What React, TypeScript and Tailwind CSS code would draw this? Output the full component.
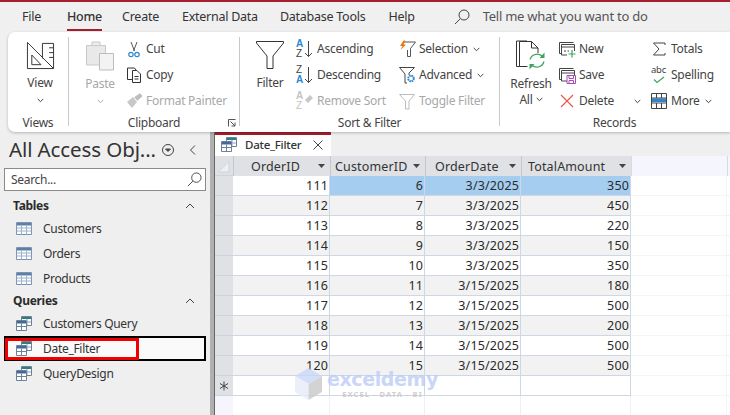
import type { ReactNode } from "react";

function Chevron({ className = "", color = "#444" }: { className?: string; color?: string }) {
  return (
    <svg width="7" height="5" viewBox="0 0 7 5" className={className} fill="none" stroke={color} strokeWidth="1">
      <path d="M.7.9 3.5 3.7 6.3.9" />
    </svg>
  );
}

const ViewIcon = () => (
  <svg width="29" height="29" viewBox="0 0 30 30" fill="none" stroke="#333" strokeWidth="1">
    <path d="M1.500 1.500 28.500 28.500H1.500Z" />
    <path d="M6 14.500 15.500 24.500H6Z" />
    <path d="M17 2.500H28.500V28" />
    <path d="M17 2.500V18M24 7H28.500M24 12H28.500M24 17H28.500" />
  </svg>
);

const PasteIcon = () => (
  <svg width="30" height="32" viewBox="0 0 30 32" fill="none">
    <path d="M1.500 5.500H20.500V25H1.500Z" fill="#e9e9e9" stroke="#c9c9c9" />
    <path d="M7 5.500V2H15V5.500Z" fill="#eee" stroke="#c9c9c9" />
    <path d="M14.500 13.500H28.500V30H14.500Z" fill="#f3f3f3" stroke="#bdbdbd" />
  </svg>
);

const CutIcon = () => (
  <svg width="16" height="17" viewBox="0 0 16 17" fill="none">
    <path d="M5 1 8.500 10M11 1 7.500 10" stroke="#555" />
    <circle cx="5" cy="13.500" r="2.200" stroke="#2e86d0" strokeWidth="1.200" />
    <circle cx="11" cy="13.500" r="2.200" stroke="#2e86d0" strokeWidth="1.200" />
  </svg>
);

const CopyIcon = () => (
  <svg width="16" height="16" viewBox="0 0 16 16" fill="none" stroke="#333">
    <path d="M6 12.500H1.500V1H8.500L10 3" />
    <path d="M6.500 3.500H11L14.500 7V15.500H6.500Z" fill="#fff" />
    <path d="M8.500 9.500H12.500M8.500 12H12.500" />
  </svg>
);

const BrushIcon = () => (
  <svg width="17" height="16" viewBox="0 0 17 16" fill="none">
    <path d="M1 9 7 4 11 9 6 15Z" fill="#c8c8c8" />
    <path d="M8.500 4.500 14 .8 16 3 11 7.500" fill="#bdbdbd" stroke="#bdbdbd" />
  </svg>
);

const FunnelIcon = () => (
  <svg width="30" height="30" viewBox="0 0 30 30" fill="none" stroke="#333">
    <path d="M1.500 1.500H28.500V3L18 16V28.500H12V16L1.500 3Z" />
  </svg>
);

function SortIcon({ top, bottom, muted }: { top: string; bottom: string; muted?: boolean }) {
  const blue = muted ? "#c4c4c4" : "#2e86d0";
  const dark = muted ? "#c4c4c4" : "#444";
  return (
    <div className="relative w-[18px] h-[18px] leading-none text-[10px] font-['Liberation_Sans',sans-serif]">
      <span className={`absolute left-0 top-[-1px] ${top === "A" ? "font-bold" : ""}`} style={{ color: top === "A" ? blue : dark }}>{top}</span>
      <span className={`absolute left-0 top-[9px] ${bottom === "A" ? "font-bold" : ""}`} style={{ color: bottom === "A" ? blue : dark }}>{bottom}</span>
      {muted ? (
        <svg width="10" height="10" viewBox="0 0 10 10" className="absolute left-[8px] top-[2px]">
          <path d="M1 6 6 1 9 4 4 9Z" fill="#c8c8c8" />
        </svg>
      ) : (
        <svg width="9" height="17" viewBox="0 0 9 17" className="absolute left-[8px] top-[1px]" fill="none" stroke="#444">
          <path d="M4.500 0V15.500M1 12 4.500 15.500 8 12" />
        </svg>
      )}
    </div>
  );
}

const SelectionIcon = () => (
  <svg width="17" height="18" viewBox="0 0 17 18" fill="none">
    <path d="M5 2H16.500L11.500 8.500V16.500H8.500V10" stroke="#555" />
    <path d="M4.500.5 1 6H3.500L1.500 10 7 4.500H4.500L6.500.5Z" fill="#e8770c" />
  </svg>
);

const AdvancedIcon = () => (
  <svg width="17" height="18" viewBox="0 0 17 18" fill="none">
    <path d="M.5 1.500H15.500L10 7V9M.5 1.500 6 8V17H8" stroke="#444" />
    <circle cx="12" cy="12.500" r="2.800" stroke="#2e86d0" strokeWidth="2" strokeDasharray="1.600 .6" />
    <circle cx="12" cy="12.500" r="1" fill="#fff" />
  </svg>
);

const ToggleIcon = () => (
  <svg width="17" height="17" viewBox="0 0 17 17" fill="none" stroke="#bdbdbd">
    <path d="M.5 1.500H15.500L10 8V16H6.500V8Z" />
  </svg>
);

const RefreshIcon = () => (
  <svg width="30" height="32" viewBox="0 0 30 32" fill="none">
    <path d="M4 26.500H.5V1H11" stroke="#333" />
    <path d="M11.500 26.500H3.500V1.500H15.500L22 8V13M15.500 1.500V8H22" stroke="#333" fill="#fff" />
    <path d="M14 19.500A7.500 7.500 0 0 1 27 17M28 21.500A7.500 7.500 0 0 1 15 24.500" stroke="#3fa45b" strokeWidth="1.200" />
    <path d="M28.500 12.500V18H23.500ZM13.500 29.500V24H18.500Z" fill="#3fa45b" />
  </svg>
);

function RecIcon({ children }: { children: ReactNode }) {
  return (
    <svg width="17" height="17" viewBox="0 0 17 17" fill="none">
      <path d="M2.500 12.500H.5V1.500H14.500" stroke="#444" />
      <path d="M2.500 3.500H15.500V10M2.500 3.500V14H8M2.500 6H15.500" stroke="#444" fill="#fff" />
      {children}
    </svg>
  );
}

const NewIcon = () => (
  <RecIcon>
    <path d="M5 10H7M8.500 10H10" stroke="#444" />
    <path d="M13 9V16.500M9.500 13H16.500" stroke="#3fa45b" strokeWidth="1.200" />
  </RecIcon>
);

const SaveIcon = () => (
  <RecIcon>
    <path d="M8 8.500H16.500V16.500H8Z" fill="#fff" stroke="#a64db5" />
    <path d="M10 9V11.500H14.500V9M10 16V13.500H14.500V16" stroke="#a64db5" />
  </RecIcon>
);

const DeleteIcon = () => (
  <svg width="14" height="14" viewBox="0 0 14 14" fill="none" stroke="#e8594d" strokeWidth="1.200">
    <path d="M1 1 13 13M13 1 1 13" />
  </svg>
);

const SigmaIcon = () => (
  <svg width="14" height="14" viewBox="0 0 14 14" fill="none" stroke="#444">
    <path d="M13 3V1H1.500L7 7 1.500 13H13V11" />
  </svg>
);

const SpellIcon = () => (
  <div className="relative w-[16px] h-[18px]">
    <span className="absolute left-0 top-[-3px] text-[9.5px] text-[#444] leading-[14px]">abc</span>
    <svg width="12" height="8" viewBox="0 0 12 8" className="absolute left-[2px] top-[10px]" fill="none" stroke="#3fa45b" strokeWidth="1.200">
      <path d="M1 3.500 4 6.500 11 1" />
    </svg>
  </div>
);

const MoreIcon = () => (
  <svg width="16" height="16" viewBox="0 0 16 16" fill="none">
    <path d="M.5.5H15.500V15.500H.5Z" stroke="#444" fill="#fff" />
    <path d="M1 5.500H15V9H1Z" fill="#2e86d0" />
    <path d="M.5 5H15.500M.5 10H15.500M5.500.5V5M10.500.5V5M5.500 10V15.500M10.500 10V15.500" stroke="#444" />
  </svg>
);

const SearchGlass = ({ size = 16, color = "#444" }: { size?: number; color?: string }) => (
  <svg width={size} height={size} viewBox="0 0 16 16" fill="none" stroke={color}>
    <circle cx="10" cy="6" r="5" />
    <path d="M6.300 9.700 1 15" />
  </svg>
);

const TableIcon = () => (
  <svg width="16" height="13" viewBox="0 0 16 13" fill="none">
    <path d="M.5.5H15.500V12.500H.5Z" fill="#fff" stroke="#7b93b5" />
    <path d="M1 1H15V3.500H1Z" fill="#5f7ea8" />
    <path d="M.5 6H15.500M.5 9H15.500M5.500 3.500V12.500M10.500 3.500V12.500" stroke="#9db2cf" />
  </svg>
);

const QueryIcon = () => (
  <svg width="16" height="15" viewBox="0 0 16 15" fill="none">
    <path d="M5.500.5H15.500V9.500H5.500Z" fill="#fff" stroke="#6d8297" />
    <path d="M6 1H15V3H6Z" fill="#2f7d86" />
    <path d="M11 3V9M6 6H15" stroke="#8fa2b5" />
    <path d="M.5 4.500H10.500V14.500H.5Z" fill="#fff" stroke="#6d8297" />
    <path d="M1 5H10V7.500H1Z" fill="#3f6a9b" />
    <path d="M1 10.500H10M5.500 7.500V14.500" stroke="#6d8297" />
  </svg>
);

function SmallBtn({ icon, label, muted, chevron }: { icon: ReactNode; label: string; muted?: boolean; chevron?: boolean }) {
  return (
    <div className={`flex items-center h-[26px] gap-[3px] ${muted ? "text-[#a8a8a8]" : "text-[#444]"}`}>
      <div className="w-[18px] flex justify-center items-center">{icon}</div>
      <span className="whitespace-nowrap">{label}</span>
      {chevron && <Chevron className="ml-[2px]" />}
    </div>
  );
}

function Group({ w, label, children, launcher, noBorder }: { w: string; label: string; children: ReactNode; launcher?: boolean; noBorder?: boolean }) {
  return (
    <div className={`${w} relative flex flex-col h-[89px] ${noBorder ? "" : "border-r border-[#c9c9c9]"}`}>
      <div className="flex-1 flex">{children}</div>
      <div className="h-[14px] leading-[14px] text-center text-[#444] text-[12px] mb-[-4px]">{label}</div>
      {launcher && (
        <svg width="8" height="8" viewBox="0 0 8 8" fill="none" stroke="#555" className="absolute right-[3px] bottom-[-1px]">
          <path d="M.5 7.500V.5H7.500M2.500 2.500 7 7M7 3.500V7H3.500" />
        </svg>
      )}
    </div>
  );
}

const rows = [
  [111, 6, "3/3/2025", 350],
  [112, 7, "3/3/2025", 450],
  [113, 8, "3/3/2025", 220],
  [114, 9, "3/3/2025", 150],
  [115, 10, "3/3/2025", 350],
  [116, 11, "3/15/2025", 180],
  [117, 12, "3/15/2025", 500],
  [118, 13, "3/15/2025", 200],
  [119, 14, "3/15/2025", 500],
  [120, 15, "3/15/2025", 500],
];

const cols = [
  { name: "OrderID", pad: "pl-[17px]" },
  { name: "CustomerID", pad: "pl-[4px]" },
  { name: "OrderDate", pad: "pl-[9px]" },
  { name: "TotalAmount", pad: "pl-[6px]" },
];
const gridCols = "grid grid-cols-[18px_97px_95px_96px_110px_96px_3px]";

function NavItem({ icon, label, selected }: { icon: ReactNode; label: string; selected?: boolean }) {
  return (
    <div className={`flex items-center h-[25px] ${selected ? "ml-[4px] mr-[4px] border-2 border-black bg-[#fafafa] pl-[10px]" : "pl-[16px]"}`}>
      <div className="w-[27px] flex">{icon}</div>
      <span className="text-[#333] whitespace-nowrap">{label}</span>
    </div>
  );
}

function NavHeader({ label, h }: { label: string; h: string }) {
  return (
    <div className={`flex items-center justify-between ${h} pl-[13px] pr-[15px]`}>
      <span className="font-bold text-[#2b2b2b]">{label}</span>
      <svg width="10" height="6" viewBox="0 0 10 6" fill="none" stroke="#444"><path d="M1 5 5 1 9 5" /></svg>
    </div>
  );
}

export default function App() {
  const menu = ["File", "Home", "Create", "External Data", "Database Tools", "Help"];
  const menuGaps: Record<string, string> = {
    File: "ml-[22px]",
    Home: "ml-[26px]",
    Create: "ml-[20px]",
    "External Data": "ml-[23px]",
    "Database Tools": "ml-[22px]",
    Help: "ml-[23px]",
  };

  return (
    <div className="w-[730px] h-[415px] overflow-hidden bg-[#f0f0f0] font-['Noto_Sans',sans-serif] text-[12px] tracking-[-0.25px] flex flex-col">
      <div className="h-[2px] bg-[#a4202e]" />

      {/* tabs */}
      <div className="h-[30px] flex items-center text-[12.5px] text-[#333]">
        {menu.map((m) => (
          <div key={m} className={`${menuGaps[m]} relative`}>
            <span className={m === "Home" ? "font-medium" : ""}>{m}</span>
            {m === "Home" && <div className="absolute left-0 right-0 top-[21px] h-[2px] bg-[#a4202e]" />}
          </div>
        ))}
        <div className="ml-[39px] mr-[13px]"><SearchGlass /></div>
        <span className="text-[#555] text-[13px]">Tell me what you want to do</span>
      </div>

      {/* ribbon */}
      <div className="ml-[8px] h-[100px] bg-white rounded-l-[7px] shadow-[0_1px_3px_rgba(0,0,0,0.25)] flex pt-[5px] relative z-10">
        <Group w="w-[61px]" label="Views">
          <div className="flex-1 flex flex-col items-center pt-[4px] pl-[4px]">
            <ViewIcon />
            <span className="mt-[4px] text-[#444]">View</span>
            <Chevron className="mt-[6px]" />
          </div>
        </Group>
        <Group w="w-[171px]" label="Clipboard" launcher>
          <div className="w-[57px] flex flex-col items-center pt-[3px] pl-[5px] text-[#a8a8a8]">
            <PasteIcon />
            <span className="mt-[3px]">Paste</span>
            <Chevron className="mt-[6px]" color="#a8a8a8" />
          </div>
          <div className="flex flex-col -mt-[1px] -ml-[1px]">
            <SmallBtn icon={<CutIcon />} label="Cut" />
            <SmallBtn icon={<CopyIcon />} label="Copy" />
            <SmallBtn icon={<BrushIcon />} label="Format Painter" muted />
          </div>
        </Group>
        <Group w="w-[260px]" label="Sort & Filter">
          <div className="w-[55px] flex flex-col items-center pt-[3px] pl-[5px]">
            <FunnelIcon />
            <span className="mt-[4px] text-[#444]">Filter</span>
          </div>
          <div className="w-[103px] flex flex-col -mt-[1px] pl-[1px]">
            <SmallBtn icon={<SortIcon top="A" bottom="Z" />} label="Ascending" />
            <SmallBtn icon={<SortIcon top="Z" bottom="A" />} label="Descending" />
            <SmallBtn icon={<SortIcon top="A" bottom="Z" muted />} label="Remove Sort" muted />
          </div>
          <div className="flex flex-col -mt-[1px]">
            <SmallBtn icon={<SelectionIcon />} label="Selection" chevron />
            <SmallBtn icon={<AdvancedIcon />} label="Advanced" chevron />
            <SmallBtn icon={<ToggleIcon />} label="Toggle Filter" muted />
          </div>
        </Group>
        <Group w="w-[229px]" label="Records" noBorder>
          <div className="w-[58px] flex flex-col items-center pt-[3px] pl-[4px] text-[#444]">
            <RefreshIcon />
            <span className="mt-[4px] leading-[16px]">Refresh</span>
            <span className="flex items-center gap-[3px] leading-[15px]">All <Chevron /></span>
          </div>
          <div className="w-[92px] flex flex-col -mt-[1px]">
            <SmallBtn icon={<NewIcon />} label="New" />
            <SmallBtn icon={<SaveIcon />} label="Save" />
            <div className="flex items-center">
              <SmallBtn icon={<DeleteIcon />} label="Delete" />
              <Chevron className="ml-[20px]" />
            </div>
          </div>
          <div className="flex flex-col -mt-[1px]">
            <SmallBtn icon={<SigmaIcon />} label="Totals" />
            <SmallBtn icon={<SpellIcon />} label="Spelling" />
            <SmallBtn icon={<MoreIcon />} label="More" chevron />
          </div>
        </Group>
      </div>

      <div className="flex-1 flex min-h-0">
        {/* navigation pane */}
        <div className="w-[210px] shrink-0 bg-[#efefef] relative tracking-[-0.3px]">
          <div className="h-[36px] flex items-center pl-[9px] pb-[1px]">
            <span className="text-[20.5px] text-[#333] tracking-[-0.1px] w-[151px] whitespace-nowrap">All Access Obj...</span>
            <svg width="14" height="14" viewBox="0 0 14 14" fill="none" stroke="#444" className="ml-[1px]">
              <circle cx="7" cy="7" r="5.500" />
              <path d="M4.500 6H9.500L7 8.500Z" fill="#444" />
            </svg>
            <svg width="8" height="12" viewBox="0 0 8 12" fill="none" stroke="#444" className="ml-[14px]">
              <path d="M6 1.500 1.500 6 6 10.500" />
            </svg>
          </div>
          <div className="ml-[4px] mr-[4px] h-[23px] border border-[#8a8a8a] bg-white flex items-center justify-between pl-[6px] pr-[3px] text-[#444]">
            <span>Search...</span>
            <SearchGlass size={15} />
          </div>
          <div className="mt-[4px]">
            <NavHeader label="Tables" h="h-[21px]" />
            <NavItem icon={<TableIcon />} label="Customers" />
            <NavItem icon={<TableIcon />} label="Orders" />
            <NavItem icon={<TableIcon />} label="Products" />
            <NavHeader label="Queries" h="h-[20px]" />
            <NavItem icon={<QueryIcon />} label="Customers Query" />
            <NavItem icon={<QueryIcon />} label="Date_Filter" selected />
            <NavItem icon={<QueryIcon />} label="QueryDesign" />
          </div>
          {/* annotation box */}
          <div className="absolute left-[5px] top-[206px] w-[134px] h-[22px] border-[3px] border-[#f00000]" />
        </div>
        <div className="w-[4px] shrink-0 bg-[#b0b0b0]" />
        <div className="w-[1px] shrink-0 bg-[#666]" />

        {/* document */}
        <div className="flex-1 flex flex-col min-w-0 relative">
          <div className="h-[24px] flex bg-[#efefef] shrink-0">
            <div className="w-[116px] bg-white border-t-[3px] border-[#a4202e] flex items-center pl-[6px] pr-[8px] pb-[2px]">
              <QueryIcon />
              <span className="ml-[8px] font-medium text-[#333] text-[11.5px] flex-1">Date_Filter</span>
              <svg width="10" height="10" viewBox="0 0 10 10" fill="none" stroke="#444"><path d="M.5.5 9.500 9.500M9.500.5.5 9.500" /></svg>
            </div>
          </div>
          <div className={`${gridCols} bg-white text-[#333] tracking-[0.15px] text-[12.5px] leading-[19px]`}>
            <div className="h-[20px] bg-[#dfe1e5] border-b border-[#cfd4dc] relative">
              <svg width="12" height="12" viewBox="0 0 12 12" className="absolute left-[3px] top-[5px]"><path d="M11 .5V11H.5Z" fill="#eef0f3" stroke="#cfd4dc" /></svg>
            </div>
            {cols.map((c) => (
              <div key={c.name} className={`h-[20px] bg-[#dfe1e5] border-l border-[#c3c8d0] flex items-center relative ${c.pad}`}>
                <span>{c.name}</span>
                <svg width="7" height="4" viewBox="0 0 7 4" className="absolute right-[5px] top-[8px]"><path d="M0 0H7L3.500 4Z" fill="#444" /></svg>
              </div>
            ))}
            <div className="h-[20px] bg-[#f5f6fd] border-l border-[#d6dae3]" />
            <div className="h-[20px] bg-[#f5f6fd] border-l border-[#d6dae3]" />

            {rows.map((r, i) => {
              const alt = i % 2 === 1;
              return (
                <div key={i} className="contents">
                  <div className="h-[20px] bg-[#dfe1e5] border-b border-[#cfd4dc]" />
                  {r.map((v, j) => (
                    <div
                      key={j}
                      className={`h-[20px] text-right pr-[1px] border-b-[1.5px] border-r-[1.5px] border-[#cfd6e4] ${
                        i === 0 && j > 0 ? "bg-[#a5cdf0]" : alt ? "bg-[#f2f2f2]" : "bg-white"
                      } text-[#2b2b2b]`}
                    >
                      {v}
                    </div>
                  ))}
                  <div className="h-[20px] border-b border-r border-[#f3f4f8]" />
                  <div className="h-[20px] border-b border-[#f3f4f8]" />
                </div>
              );
            })}

            <div className="h-[20px] bg-[#dfe1e5] border-b border-[#cfd4dc] flex items-center justify-center">
              <svg width="10" height="10" viewBox="0 0 10 10" fill="none" stroke="#444"><path d="M5 .5V9.500M1 2.500 9 7.500M9 2.500 1 7.500" /></svg>
            </div>
            <div className="h-[20px] border-b-[1.5px] border-r-[1.5px] border-[#cfd6e4]" />
            <div className="h-[20px] border-b-[1.5px] border-r-[1.5px] border-[#cfd6e4]" />
            <div className="h-[20px] border-b-[1.5px] border-r-[1.5px] border-[#cfd6e4]" />
            <div className="h-[20px] border-b-[1.5px] border-r-[1.5px] border-[#cfd6e4]" />
            <div className="h-[20px] border-b border-r border-[#f3f4f8]" />
            <div className="h-[20px] border-b border-[#f3f4f8]" />

            <div className="h-[20px] bg-[#f5f6fd]" />
            <div className="h-[20px] border-r border-[#eef0f6]" />
            <div className="h-[20px] border-r border-[#eef0f6]" />
            <div className="h-[20px] border-r border-[#eef0f6]" />
            <div className="h-[20px] border-r border-[#eef0f6]" />
            <div className="h-[20px] border-r border-[#f3f4f8]" />
            <div className="h-[20px]" />
          </div>

          {/* watermark */}
          <div className="absolute left-[79px] top-[236px] flex items-center pointer-events-none opacity-80">
            <svg width="29" height="32" viewBox="0 0 29 32">
              <path d="M14.500 0 28 8 14.500 16 1 8Z" fill="#c9d8f8" />
              <path d="M1 8 14.500 16V32L1 24Z" fill="#e6ecf8" />
              <path d="M28 8V24L14.500 32V16Z" fill="#c9c9c9" />
            </svg>
            <div className="ml-[4px] flex flex-col items-center">
              <span className="text-[19px] leading-[20px] font-bold font-['DejaVu_Sans',sans-serif] text-[#bccdf6] tracking-[-0.4px]">exceldemy</span>
              <span className="text-[7.5px] leading-[10px] font-bold text-[#c4c4c4] tracking-[1.1px]">EXCEL - DATA - BI</span>
            </div>
          </div>
        </div>
      </div>
    </div>
  );
}
